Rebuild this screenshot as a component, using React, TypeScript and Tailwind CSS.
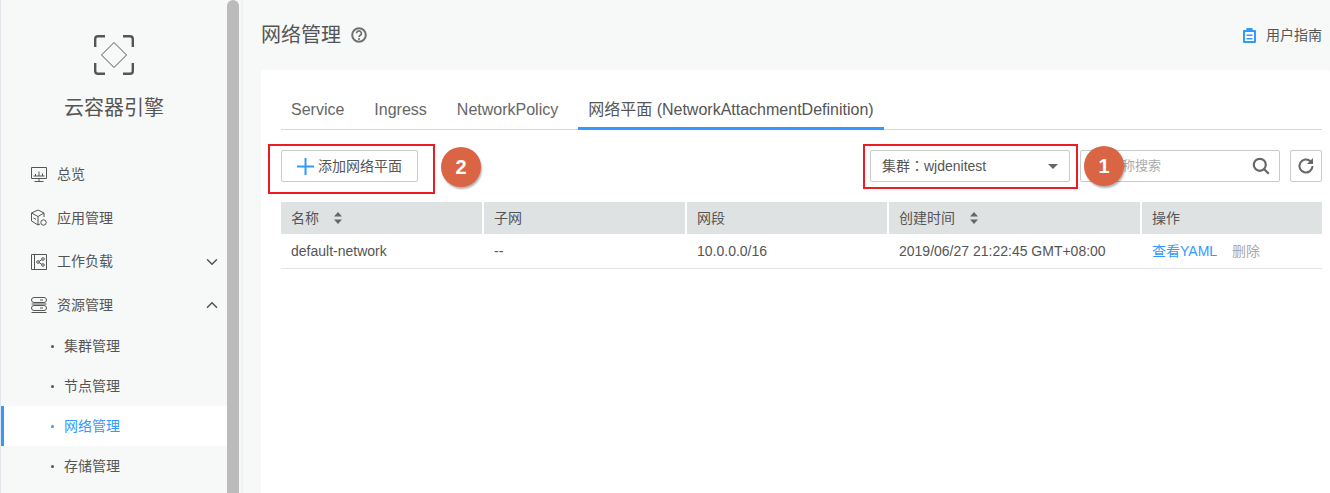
import { ChevronDown, ChevronUp } from "lucide-react";
import type { ReactNode } from "react";

const font = { fontFamily: '"Liberation Sans", "Noto Sans CJK SC", sans-serif' };

function LogoIcon() {
  return (
    <svg width="42" height="42" viewBox="0 0 42 42" fill="none" stroke="#555" className="block">
      <path d="M12 2.200H5a2.800 2.800 0 0 0-2.800 2.800v8M30 2.200h7a2.800 2.800 0 0 1 2.800 2.800v8M2.200 29v8a2.800 2.800 0 0 0 2.800 2.800h7M39.800 29v8a2.800 2.800 0 0 1-2.800 2.800h-7" strokeWidth="2.400" />
      <path d="M21 8.500 33.500 21 21 33.500 8.500 21Z" strokeWidth="1" />
    </svg>
  );
}

function OverviewIcon() {
  return (
    <svg width="18" height="18" viewBox="0 0 18 18" fill="none" stroke="#555" strokeWidth="1">
      <path d="M1.500 2.500h15v11h-15zM9 13.500v3M4.500 16.500h9M5.500 11V9M9 11V6.500M12.500 11V8.500M3.500 11h11" />
    </svg>
  );
}
function AppIcon() {
  return (
    <svg width="18" height="18" viewBox="0 0 18 18" fill="none" stroke="#555" strokeWidth="1">
      <path d="M8 1 14 4v4M8 1 1.500 4v8L8 16l2-1M1.500 4 8 7.500 14 4M8 7.500V16M3.500 9l2.500 1.300" />
      <circle cx="13.500" cy="13.500" r="2.700" />
    </svg>
  );
}
function WorkIcon() {
  return (
    <svg width="18" height="18" viewBox="0 0 18 18" fill="none" stroke="#555" strokeWidth="1">
      <path d="M1.500 1.500h15v15h-15zM4.500 1.500v15" />
      <circle cx="8" cy="9" r="1.300" />
      <circle cx="13" cy="6" r="1.300" />
      <circle cx="13" cy="12" r="1.300" />
      <path d="M9 8.500 12 6.500M9 9.500l3 2" />
    </svg>
  );
}
function ResIcon() {
  return (
    <svg width="18" height="18" viewBox="0 0 18 18" fill="none" stroke="#555" strokeWidth="1">
      <path d="M4 1.500h10a1.500 1.500 0 0 1 0 5H4a1.500 1.500 0 0 1 0-5ZM4 9.500h10a1.500 1.500 0 0 1 0 5H4a1.500 1.500 0 0 1 0-5Z" />
      <path d="M1.500 8h15M1.500 16.500h15M10 4h3M10 12h3" />
    </svg>
  );
}
function Sort() {
  return (
    <svg width="8" height="12" viewBox="0 0 8 12" fill="#666" className="ml-[15px]">
      <path d="M4 0 8 4.500H0ZM4 12 0 7.500h8Z" />
    </svg>
  );
}

function NavItem({ icon, label, chevron, short }: { icon: ReactNode; label: string; chevron?: ReactNode; short?: boolean }) {
  return (
    <div className={`flex ${short ? "h-[43px]" : "h-[44px]"} items-center pl-[29px] pr-[6px] text-[14px] text-[#555]`}>
      <span className="mr-[9px] flex w-[18px] justify-center">{icon}</span>
      <span className="flex-1">{label}</span>
      {chevron}
    </div>
  );
}
function SubItem({ label, active }: { label: string; active?: boolean }) {
  return (
    <div
      className={
        active
          ? "flex h-[40px] items-center border-l-[3px] border-[#3399ff] bg-white pl-[47px] text-[14px] text-[#3399ff]"
          : "flex h-[40px] items-center pl-[50px] text-[14px] text-[#555]"
      }
    >
      <span className={active ? "mr-[10px] h-[3px] w-[3px] rounded-full bg-[#3399ff]" : "mr-[10px] h-[3px] w-[3px] rounded-full bg-[#555]"} />
      {label}
    </div>
  );
}

function Th({ w, children, last }: { w: string; children: ReactNode; last?: boolean }) {
  return (
    <div className={`${w} ${last ? "flex-1" : "border-r-2 border-white"} flex items-center pl-[10px]`}>{children}</div>
  );
}

export default function App() {
  return (
    <div style={font} className="flex h-[493px] w-[1330px] overflow-hidden bg-[#f7f8f8] text-[#555]">
      <aside className="flex w-[227px] shrink-0 flex-col border-l border-[#e3e5ea] bg-[#f7f8f8]">
        <div className="flex flex-col items-center pt-[34px]">
          <div className="pr-[1px]"><LogoIcon /></div>
          <div className="mt-[18px] text-[20px] leading-[28px] text-[#555]">云容器引擎</div>
        </div>
        <div className="mt-[30px]">
          <NavItem icon={<OverviewIcon />} label="总览" />
          <NavItem icon={<AppIcon />} label="应用管理" />
          <NavItem short icon={<WorkIcon />} label="工作负载" chevron={<ChevronDown size={18} strokeWidth={2} className="text-[#555]" />} />
          <NavItem icon={<ResIcon />} label="资源管理" chevron={<ChevronUp size={18} strokeWidth={2} className="text-[#555]" />} />
          <div className="mt-[-1px]">
            <SubItem label="集群管理" />
            <SubItem label="节点管理" />
            <SubItem label="网络管理" active />
            <SubItem label="存储管理" />
          </div>
        </div>
      </aside>
      <div className="h-full w-[12px] shrink-0 rounded-t-[6px] bg-[#bbbbbb]" />
      <div className="ml-[2px] w-[2px] shrink-0 bg-[#f0f1f1]" />
      <main className="flex min-w-0 flex-1 flex-col pl-[18px]">
        <header className="flex h-[70px] shrink-0 items-center pr-[8px]">
          <h1 className="text-[20px] text-[#555]">网络管理</h1>
          <svg width="16" height="16" viewBox="0 0 16 16" fill="none" className="ml-[10px]">
            <circle cx="8" cy="8" r="6.800" stroke="#707070" strokeWidth="2" />
            <path d="M5.600 6.300a2.400 2.400 0 1 1 3.700 2c-.8.500-1.300.9-1.300 1.700" stroke="#707070" strokeWidth="1.700" />
            <circle cx="8" cy="12" r="1.100" fill="#707070" />
          </svg>
          <div className="ml-auto flex items-center text-[14px] leading-[18px] text-[#555]">
            <svg width="13" height="15" viewBox="0 0 13 15" className="mr-[10px]">
              <path d="M1 2h2.500V0h6v2H12a1 1 0 0 1 1 1v11a1 1 0 0 1-1 1H1a1 1 0 0 1-1-1V3a1 1 0 0 1 1-1Z" fill="#3399ff" />
              <path d="M2 4h9v9H2z" fill="#fff" />
              <path d="M3.500 1.500h6V4h-6zM3.500 6.500h6V8h-6zM3.500 10h6v1.500h-6z" fill="#3399ff" />
            </svg>
            用户指南
          </div>
        </header>
        <section className="relative flex-1 rounded-t-[2px] bg-white pl-[20px] pr-[8px] pt-[24px]">
          <nav className="flex h-[36px] items-start border-b border-[#d5d7d9] text-[16px] text-[#666]">
            <span className="ml-[10px] mr-[30px] leading-[32px]">Service</span>
            <span className="mr-[30px] leading-[32px]">Ingress</span>
            <span className="mr-[20px] leading-[32px]">NetworkPolicy</span>
            <span className="h-[36px] border-b-[3px] border-[#3399ff] px-[10px] leading-[32px] text-[#555]">
              网络平面 (NetworkAttachmentDefinition)
            </span>
          </nav>
          <div className="mt-[20px] flex h-[32px] items-center">
            <button className="flex h-[32px] w-[137px] items-center rounded-[2px] border border-[#c8cacc] bg-white pl-[15px] text-[14px] text-[#555]">
              <svg width="17" height="17" viewBox="0 0 17 17" className="mr-[4px]">
                <path d="M8.500 0v17M0 8.500h17" stroke="#3399ff" strokeWidth="2" />
              </svg>
              添加网络平面
            </button>
            <div className="ml-auto flex h-[32px] w-[200px] items-center justify-between rounded-[2px] border border-[#c8cacc] pl-[11px] pr-[11px] text-[14px] text-[#555]">
              <span>
                集群<span style={{ fontFamily: '"Noto Sans CJK TC", sans-serif' }}>：</span>wjdenitest
              </span>
              <span className="h-0 w-0 border-x-[5px] border-t-[5px] border-x-transparent border-t-[#666]" />
            </div>
            <div className="ml-[10px] flex h-[32px] w-[200px] items-center justify-between rounded-[2px] border border-[#c8cacc] pl-[28px] pr-[9px] text-[13px] text-[#a8aaac]">
              <span>名称搜索</span>
              <svg width="18" height="18" viewBox="0 0 18 18" fill="none" stroke="#666" strokeWidth="2.200">
                <circle cx="7.800" cy="7.800" r="6" />
                <path d="m12.200 12.200 4.600 4.600" />
              </svg>
            </div>
            <div className="ml-[10px] flex h-[32px] w-[32px] items-center justify-center rounded-[2px] border border-[#c8cacc]">
              <svg width="18" height="18" viewBox="0 0 18 18" fill="none">
                <path d="M15.500 9a6.500 6.500 0 1 1-2-4.700" stroke="#666" strokeWidth="2" />
                <path d="M16 1v6h-6Z" fill="#666" />
              </svg>
            </div>
          </div>
          <div className="mt-[20px] flex h-[32px] bg-[#dfe2e3] text-[14px] text-[#555]">
            <Th w="w-[203px]">名称<Sort /></Th>
            <Th w="w-[203px]">子网</Th>
            <Th w="w-[202px]">网段</Th>
            <Th w="w-[253px]">创建时间<Sort /></Th>
            <Th w="" last>操作</Th>
          </div>
          <div className="flex h-[35px] items-center border-b border-[#e2e4e6] text-[14px] text-[#555]">
            <div className="w-[203px] pl-[10px]">default-network</div>
            <div className="w-[203px] pl-[10px]">--</div>
            <div className="w-[202px] pl-[10px]">10.0.0.0/16</div>
            <div className="w-[253px] pl-[10px]">2019/06/27 21:22:45 GMT+08:00</div>
            <div className="flex-1 pl-[10px]">
              <span className="text-[#3399ff]">查看YAML</span>
              <span className="ml-[15px] text-[#aaa]">删除</span>
            </div>
          </div>

          <div className="pointer-events-none absolute left-[7px] top-[74px] h-[50px] w-[167px] border-[2px] border-[#ed1c24]" />
          <div className="pointer-events-none absolute left-[602px] top-[74px] h-[45px] w-[215px] border-[2px] border-[#ed1c24]" />
          <div className="absolute left-[180px] top-[77px] flex h-[40px] w-[40px] items-center justify-center rounded-full bg-[#d96545] text-[20px] font-bold text-white shadow-[1px_2px_2px_rgba(0,0,0,0.3)]">2</div>
          <div className="absolute left-[823px] top-[76px] flex h-[40px] w-[40px] items-center justify-center rounded-full bg-[#d96545] text-[20px] font-bold text-white shadow-[1px_2px_2px_rgba(0,0,0,0.3)]">1</div>
        </section>
      </main>
    </div>
  );
}
